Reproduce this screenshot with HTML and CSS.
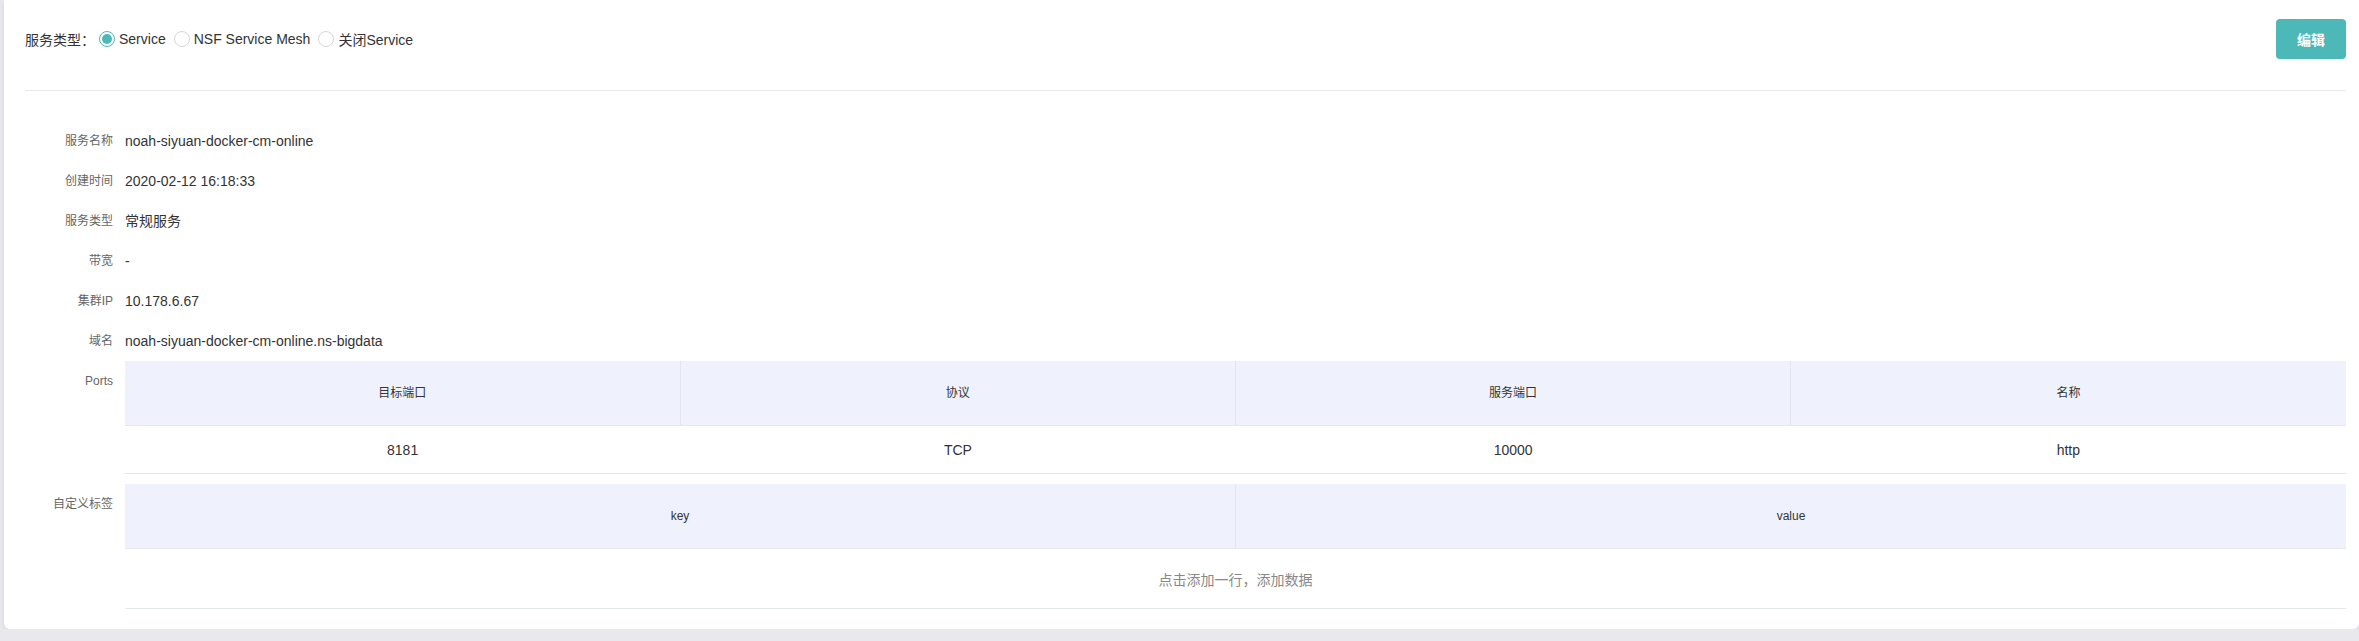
FILE: index.html
```html
<!DOCTYPE html>
<html lang="zh-CN">
<head>
<meta charset="utf-8">
<title>服务详情</title>
<link rel="stylesheet" href="styles.css">
</head>
<body>
<div class="card">
  <div class="top">
    <div class="type-select">
      <span class="type-label">服务类型：</span>
      <label class="radio checked"><span class="dot"></span><span class="radio-text">Service</span></label>
      <label class="radio"><span class="dot"></span><span class="radio-text">NSF Service Mesh</span></label>
      <label class="radio"><span class="dot"></span><span class="radio-text">关闭Service</span></label>
    </div>
    <button class="btn-edit">编辑</button>
  </div>
  <div class="divider"></div>
  <div class="info">
    <div class="row"><div class="label">服务名称</div><div class="value">noah-siyuan-docker-cm-online</div></div>
    <div class="row"><div class="label">创建时间</div><div class="value">2020-02-12 16:18:33</div></div>
    <div class="row"><div class="label">服务类型</div><div class="value">常规服务</div></div>
    <div class="row"><div class="label">带宽</div><div class="value">-</div></div>
    <div class="row"><div class="label">集群IP</div><div class="value">10.178.6.67</div></div>
    <div class="row"><div class="label">域名</div><div class="value">noah-siyuan-docker-cm-online.ns-bigdata</div></div>
    <div class="row">
      <div class="label">Ports</div>
      <div class="value">
        <table class="grid">
          <thead>
            <tr><th>目标端口</th><th>协议</th><th>服务端口</th><th>名称</th></tr>
          </thead>
          <tbody>
            <tr><td>8181</td><td>TCP</td><td>10000</td><td>http</td></tr>
          </tbody>
        </table>
      </div>
    </div>
    <div class="row row-gap">
      <div class="label">自定义标签</div>
      <div class="value">
        <table class="grid">
          <thead>
            <tr><th>key</th><th>value</th></tr>
          </thead>
          <tbody>
            <tr><td colspan="2" class="empty">点击添加一行，添加数据</td></tr>
          </tbody>
        </table>
      </div>
    </div>
  </div>
</div>
</body>
</html>
```

FILE: styles.css
```css
html, body {
  margin: 0;
  padding: 0;
}
body {
  background: #e8e8ed;
  font-family: "Liberation Sans", "Noto Sans CJK SC", sans-serif;
  color: #333;
}
.card {
  margin-left: 4px;
  background: #fff;
  border-radius: 0 0 6px 6px;
  padding: 19px 13px 20px 21px;
  box-shadow: 0 2px 6px rgba(0, 0, 0, 0.08);
}
.top {
  display: flex;
  align-items: center;
  justify-content: space-between;
  height: 40px;
}
.type-select {
  display: flex;
  align-items: center;
  font-size: 14px;
  color: #333;
}
.type-label {
  margin-right: 4px;
}
.radio {
  display: flex;
  align-items: center;
  margin-right: 8px;
}
.dot {
  box-sizing: border-box;
  width: 16px;
  height: 16px;
  border-radius: 50%;
  border: 1px solid #d6d6d9;
  background: #fff;
  margin-right: 4px;
  display: flex;
  align-items: center;
  justify-content: center;
}
.radio.checked .dot {
  border-color: #4db8b8;
}
.radio.checked .dot::after {
  content: "";
  width: 10px;
  height: 10px;
  border-radius: 50%;
  background: #4db8b8;
}
.btn-edit {
  width: 70px;
  height: 40px;
  border: none;
  border-radius: 4px;
  background: #4db8b8;
  color: #fff;
  font-family: "Noto Sans CJK SC", sans-serif;
  font-size: 14px;
  font-weight: bold;
  padding: 0;
}
.divider {
  margin-top: 31px;
  border-top: 1px solid #e8e9f0;
}
.info {
  padding-top: 30px;
}
.row {
  display: grid;
  grid-template-columns: 88px 1fr;
  column-gap: 12px;
}
.row-gap {
  margin-top: 10px;
}
.label {
  text-align: right;
  font-size: 12px;
  line-height: 40px;
  color: #666;
}
.value {
  font-size: 14px;
  line-height: 40px;
  color: #333;
}
.grid {
  width: 100%;
  border-collapse: collapse;
  table-layout: fixed;
}
.grid th {
  height: 64px;
  padding: 0;
  background: #eff2fd;
  font-size: 12px;
  font-weight: normal;
  color: #333;
  line-height: 16px;
  text-align: center;
  border-bottom: 1px solid #e5e8f1;
}
.grid th + th {
  border-left: 1px solid #e3e6f0;
}
.grid td {
  height: 47px;
  padding: 0;
  text-align: center;
  font-size: 14px;
  line-height: 18px;
  color: #333;
  border-bottom: 1px solid #e5e8f1;
}
.grid td.empty {
  height: 59px;
  color: #888;
  font-family: "Noto Sans CJK SC", sans-serif;
}
```
